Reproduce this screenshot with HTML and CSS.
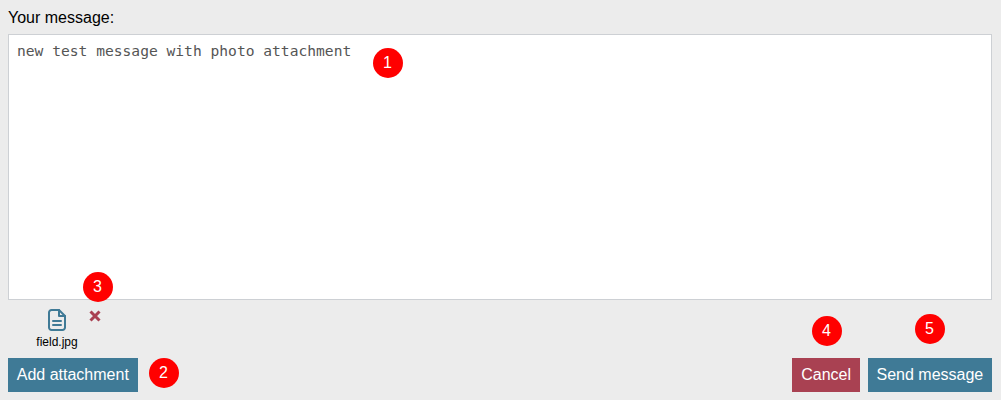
FILE: index.html
```html
<!DOCTYPE html>
<html lang="en">

<head>
    <meta charset="UTF-8" />
    <meta name="viewport" content="width=device-width,initial-scale=1.0" />
    <title>Your message</title>
    <link rel="stylesheet" href="styles.css">
</head>

<body>
    <form class="composer">
        <label class="composer-label" for="message">Your message:</label>
        <textarea class="composer-text" id="message">new test message with photo attachment</textarea>

        <div class="attachments">
            <div class="attachment">
                <svg class="attachment-icon" width="18" height="22" viewBox="0 0 18 22" fill="none" stroke="#3f7a96" stroke-width="2" stroke-linejoin="round" stroke-linecap="round">
                    <path d="M11 1H3.5A2.5 2.5 0 0 0 1 3.5v15A2.5 2.5 0 0 0 3.500 21h11a2.500 2.500 0 0 0 2.500-2.500V7z" />
                    <path d="M11 1v6h6" />
                    <path d="M5 12h8M5 16h8" />
                </svg>
                <span class="attachment-name">field.jpg</span>
            </div>
            <svg class="attachment-remove" width="12" height="12" viewBox="0 0 12 12" stroke="#a94152" stroke-width="3">
                <path d="M1.500 1.500l9 9M10.500 1.500l-9 9" />
            </svg>
        </div>

        <div class="actions">
            <button class="btn btn-primary" type="button">Add attachment</button>
            <div class="actions-right">
                <button class="btn btn-danger" type="button">Cancel</button>
                <button class="btn btn-primary" type="button">Send message</button>
            </div>
        </div>
    </form>

    <span class="marker marker-1">1</span>
    <span class="marker marker-2">2</span>
    <span class="marker marker-3">3</span>
    <span class="marker marker-4">4</span>
    <span class="marker marker-5">5</span>
</body>

</html>
```

FILE: styles.css
```css
* {
    margin: 0;
    padding: 0;
    box-sizing: border-box;
}

html,
body {
    height: 100%;
}

body {
    padding: 8px 9px 8px 8px;
    font-family: "Liberation Sans", Arial, sans-serif;
    background: #ececec;
    color: #000;
    position: relative;
    overflow: hidden;
}

.composer {
    display: flex;
    flex-direction: column;
}

.composer-label {
    display: block;
    height: 26px;
    font-size: 16px;
    line-height: 20px;
}

.composer-text {
    display: block;
    width: 100%;
    height: 266px;
    padding: 7px 8px 8px;
    border: 1px solid #cdd0d4;
    background: #fff;
    color: #555;
    font-family: "DejaVu Sans Mono", monospace;
    font-size: 14.62px;
    line-height: 18px;
    resize: none;
}

.attachments {
    display: flex;
    align-items: flex-start;
    height: 58px;
    padding: 9px 0 0 24px;
}

.attachment {
    display: flex;
    flex-direction: column;
    align-items: center;
    gap: 4px;
    width: 50px;
}

.attachment-name {
    font-size: 12px;
    line-height: 14px;
}

.attachment-remove {
    margin: 1px 0 0 7px;
}

.actions {
    display: flex;
    justify-content: space-between;
}

.actions-right {
    display: flex;
    gap: 8px;
}

.btn {
    height: 34px;
    padding: 0 8.75px;
    border: none;
    color: #fff;
    font-family: inherit;
    font-size: 16px;
    cursor: pointer;
}

.btn-primary {
    background: #3f7a96;
}

.btn-danger {
    background: #a94152;
}

/* numbered callouts drawn over the screenshot */
.marker {
    position: absolute;
    width: 30px;
    height: 30px;
    border-radius: 50%;
    background: #ff0000;
    color: #fff;
    font-size: 16px;
    line-height: 30px;
    text-align: center;
}

.marker-1 {
    left: 372.5px;
    top: 48px;
}

.marker-2 {
    left: 148.500px;
    top: 358px;
}

.marker-3 {
    left: 82.5px;
    top: 272px;
}

.marker-4 {
    left: 811.500px;
    top: 316px;
}

.marker-5 {
    left: 914.5px;
    top: 314px;
}
```
